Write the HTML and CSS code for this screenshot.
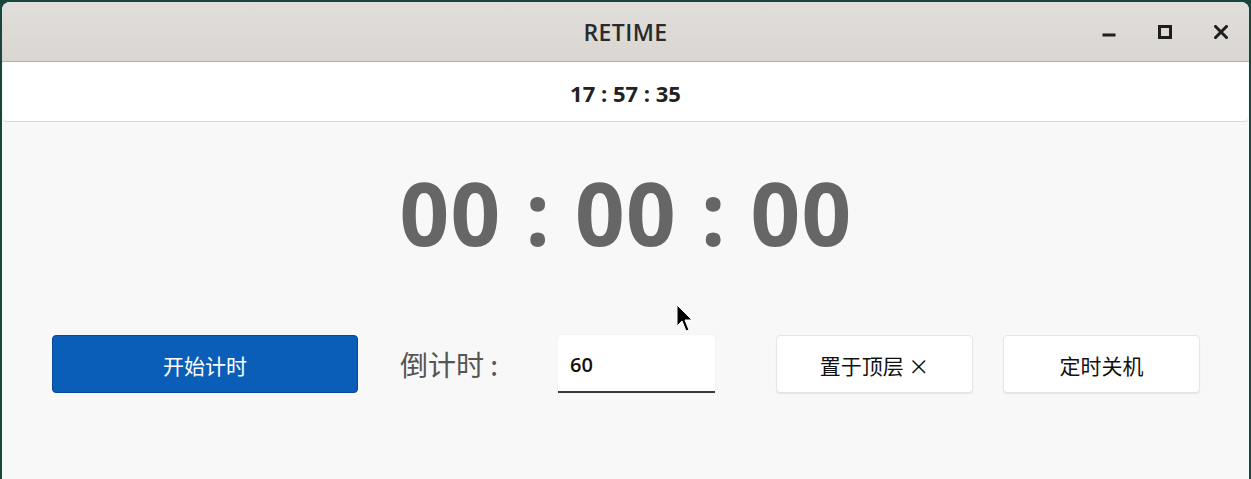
FILE: index.html
```html
<!DOCTYPE html>
<html lang="zh-CN">
<head>
<meta charset="utf-8">
<title>RETIME</title>
<link rel="stylesheet" href="styles.css">
</head>
<body>
<div class="window">
  <header class="titlebar">
    <div class="title">RETIME</div>
    <div class="controls">
      <span class="ctl">
        <svg width="14" height="14" viewBox="0 0 14 14"><rect x="0.5" y="8.5" width="13" height="3" fill="#1e1e1e"/></svg>
      </span>
      <span class="ctl">
        <svg width="14" height="14" viewBox="0 0 14 14"><rect x="1.5" y="1.5" width="11" height="11" fill="none" stroke="#1e1e1e" stroke-width="3"/></svg>
      </span>
      <span class="ctl">
        <svg width="14" height="14" viewBox="0 0 14 14"><path d="M1.5 1.5 L12.5 12.5 M12.5 1.5 L1.5 12.5" stroke="#1e1e1e" stroke-width="3" stroke-linecap="square"/></svg>
      </span>
    </div>
  </header>
  <div class="clockbar">17 : 57 : 35</div>
  <main class="content">
    <div class="timer">00 : 00 : 00</div>
    <div class="actions">
      <button class="btn primary">开始计时</button>
      <label class="label">倒计时 :</label>
      <div class="input">60</div>
      <button class="btn plain topmost">置于顶层 ×</button>
      <button class="btn plain shutdown">定时关机</button>
    </div>
    <svg class="cursor" width="20" height="30" viewBox="0 0 20 30">
      <path d="M1 1 L1 22 L6 17 L10 27 L13 26 L9 16 L16 16 Z" fill="#000" stroke="#fff" stroke-width="1"/>
    </svg>
  </main>
</div>
</body>
</html>
```

FILE: styles.css
```css
* { box-sizing: border-box; }

html, body {
  margin: 0;
  padding: 0;
  height: 100%;
}

body {
  background: #17463d;
  padding: 2px 2px 0 2px;
  font-family: "Open Sans", "Noto Sans", "Noto Sans CJK SC", sans-serif;
  overflow: hidden;
}

.window {
  height: 477px;
  background: #f8f8f8;
  border-radius: 8px 8px 0 0;
  overflow: hidden;
  display: flex;
  flex-direction: column;
}

.titlebar {
  height: 60px;
  flex: none;
  background: linear-gradient(#e1dedb, #d9d6d2);
  border-bottom: 1px solid #b4b1ad;
  position: relative;
  display: flex;
  align-items: center;
  justify-content: center;
}

.title {
  font-family: "Open Sans", "Noto Sans", sans-serif;
  font-weight: 600;
  font-size: 23px;
  color: #2a2a2a;
  letter-spacing: 0.4px;
}

.controls {
  position: absolute;
  right: 21px;
  top: 0;
  height: 60px;
  display: flex;
  align-items: center;
  gap: 42px;
}

.ctl {
  width: 14px;
  height: 14px;
  display: flex;
}

.clockbar {
  height: 60px;
  flex: none;
  margin: 0 1px;
  background: #ffffff;
  border-bottom: 1px solid #d8d8d8;
  border-radius: 0 0 4px 4px;
  display: flex;
  align-items: center;
  justify-content: center;
  font-family: "Open Sans", "Noto Sans", sans-serif;
  font-weight: 700;
  font-size: 22px;
  color: #222;
  padding-top: 2px;
}

.content {
  flex: 1;
  position: relative;
  display: flex;
  flex-direction: column;
}

.timer {
  margin-top: 37px;
  text-align: center;
  font-family: "Open Sans", "Noto Sans", sans-serif;
  font-weight: 700;
  font-size: 87px;
  line-height: 106px;
  color: #666666;
  letter-spacing: 1.2px;
  padding-left: 1px;
}

.actions {
  margin-top: 70px;
  display: flex;
  align-items: center;
  padding-left: 50px;
  height: 58px;
}

.btn {
  height: 58px;
  border-radius: 4px;
  font-family: "Noto Sans CJK SC", "Noto Sans", sans-serif;
  font-size: 21px;
  cursor: default;
  padding-top: 2px;
}

.primary {
  width: 306px;
  background: #0b5eb7;
  border: 1px solid #08489a;
  color: #ffffff;
}

.label {
  margin-left: 42px;
  width: 158px;
  font-family: "Noto Sans CJK SC", sans-serif;
  font-size: 28px;
  color: #555555;
}

.input {
  width: 157px;
  height: 58px;
  background: #ffffff;
  border-radius: 4px 4px 0 0;
  border-bottom: 2px solid #3a3a3a;
  box-shadow: 0 0 1px rgba(0,0,0,0.15);
  display: flex;
  align-items: center;
  padding-left: 12px;
  padding-top: 3px;
  font-family: "Open Sans", "Noto Sans", sans-serif;
  font-weight: 600;
  font-size: 20px;
  color: #111;
}

.plain {
  width: 197px;
  background: #ffffff;
  border: 1px solid #e6e6e6;
  box-shadow: 0 1px 1px rgba(0,0,0,0.08);
  color: #111111;
}

.topmost { margin-left: 61px; }
.shutdown { margin-left: 30px; }

.cursor {
  position: absolute;
  left: 674px;
  top: 182px;
}
```
